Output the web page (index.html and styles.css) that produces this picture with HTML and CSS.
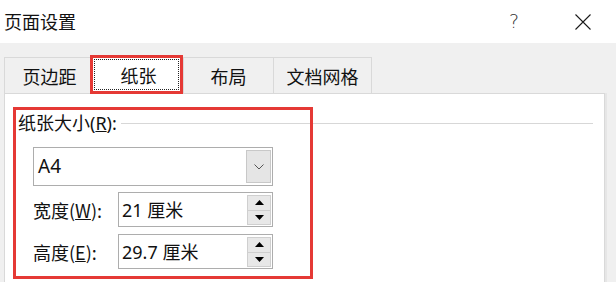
FILE: index.html
```html
<!DOCTYPE html>
<html lang="zh-CN">
<head>
    <meta charset="UTF-8">
    <meta name="viewport" content="width=device-width, initial-scale=1.0">
    <title>页面设置</title>
    <link rel="stylesheet" href="styles.css">
</head>
<body>
    <div class="dialog">
        <div class="titlebar">
            <span class="title">页面设置</span>
            <span class="help">?</span>
            <span class="close">
                <svg width="16" height="16" viewBox="0 0 16 16">
                    <path d="M0.5 0.5 L15.5 15.5 M15.5 0.5 L0.5 15.5" stroke="#1a1a1a" stroke-width="1.1" fill="none"/>
                </svg>
            </span>
        </div>

        <div class="content">
            <div class="tabs">
                <div class="tab tab-margins">页边距</div>
                <div class="tab tab-paper active"><span class="focus">纸张</span></div>
                <div class="tab tab-layout">布局</div>
                <div class="tab tab-grid">文档网格</div>
            </div>

            <div class="panel">
                <div class="group-head">
                    <span class="group-title">纸张大小(<u>R</u>):</span>
                    <span class="rule"></span>
                </div>

                <div class="select">
                    <span class="value">A4</span>
                    <span class="select-btn">
                        <svg width="10" height="6" viewBox="0 0 10 6">
                            <path d="M0.5 0.5 L5 5 L9.5 0.5" stroke="#555" stroke-width="1" fill="none"/>
                        </svg>
                    </span>
                </div>

                <div class="field">
                    <label class="field-label">宽度(<u>W</u>):</label>
                    <div class="spin-input">
                        <span class="value">21 厘米</span>
                        <div class="spinner">
                            <span class="spin-btn"><svg width="9" height="5" viewBox="0 0 9 5"><polygon points="4.5,0 9,5 0,5" fill="#000"/></svg></span>
                            <span class="spin-btn"><svg width="9" height="5" viewBox="0 0 9 5"><polygon points="0,0 9,0 4.5,5" fill="#000"/></svg></span>
                        </div>
                    </div>
                </div>

                <div class="field">
                    <label class="field-label">高度(<u>E</u>):</label>
                    <div class="spin-input">
                        <span class="value">29.7 厘米</span>
                        <div class="spinner">
                            <span class="spin-btn"><svg width="9" height="5" viewBox="0 0 9 5"><polygon points="4.5,0 9,5 0,5" fill="#000"/></svg></span>
                            <span class="spin-btn"><svg width="9" height="5" viewBox="0 0 9 5"><polygon points="0,0 9,0 4.5,5" fill="#000"/></svg></span>
                        </div>
                    </div>
                </div>

                <!-- red annotation box over the paper size group -->
                <div class="highlight"></div>
            </div>
        </div>
    </div>
</body>
</html>
```

FILE: styles.css
```css
body {
    margin: 0;
    width: 616px;
    height: 282px;
    overflow: hidden;
    font-family: "Noto Sans", "Noto Sans CJK SC", sans-serif;
    font-size: 18px;
    color: #111;
    background-color: #f0f0f0;
}

.titlebar {
    display: flex;
    align-items: center;
    height: 43px;
    padding: 0 25px 0 4px;
    background-color: #ffffff;
}

.title {
    flex: 1;
    font-family: "Noto Sans CJK SC", sans-serif;
    line-height: 1;
    padding-bottom: 1px;
}

.help {
    margin-right: 56px;
    font-family: "DejaVu Sans", sans-serif;
    font-size: 19px;
    font-weight: 200;
    color: #333;
    line-height: 1;
}

.close {
    display: flex;
    width: 16px;
    height: 16px;
}

.content {
    padding: 12px 0 0 4px;
}

.tabs {
    display: flex;
    align-items: flex-end;
    height: 38px;
    font-family: "Noto Sans CJK SC", sans-serif;
}

.tab {
    display: flex;
    align-items: center;
    justify-content: center;
    box-sizing: border-box;
    height: 36px;
    border: 1px solid #d9d9d9;
    border-bottom: none;
    border-right: none;
    background-color: #f0f0f0;
    line-height: 1;
}

.tab-margins { width: 86px; padding-left: 4px; }
.tab-layout { width: 90px; }
.tab-grid { width: 99px; border-right: 1px solid #d9d9d9; }

.tab.active {
    position: relative;
    z-index: 1;
    width: 93px;
    height: 39px;
    margin-bottom: -1px;
    padding: 1px;
    border: 3px solid #e53935;
    background-color: #ffffff;
}

.focus {
    display: flex;
    align-items: center;
    justify-content: center;
    align-self: stretch;
    flex: 1;
    padding-left: 4px;
    border: 1px dotted #222;
}

.panel {
    position: relative;
    height: 200px;
    width: 601px;
    box-sizing: border-box;
    padding: 17px 11px 0 13px;
    border: 1px solid #d9d9d9;
    background-color: #ffffff;
    box-shadow: 2px 0 0 #e6e6e6;
}

.group-head {
    display: flex;
    align-items: center;
    height: 24px;
}

.group-title {
    line-height: 1;
}

.rule {
    flex: 1;
    height: 1px;
    margin-left: 4px;
    background-color: #d7d7d7;
}

.select {
    display: flex;
    align-items: center;
    box-sizing: border-box;
    width: 240px;
    height: 39px;
    margin: 12px 0 0 15px;
    padding: 2px 1px 2px 4px;
    border: 1px solid #adadad;
}

.value {
    flex: 1;
    line-height: 1;
}

.select .value {
    font-size: 19px;
}

.select-btn {
    display: flex;
    align-items: center;
    justify-content: center;
    align-self: stretch;
    box-sizing: border-box;
    width: 25px;
    border: 1px solid #c8c8c8;
    background-color: #e5e5e5;
}

.field {
    display: flex;
    align-items: center;
    margin: 6px 0 0 15px;
}

.field + .field {
    margin-top: 7px;
}

.field-label {
    width: 85px;
    font-family: "Noto Sans CJK SC", sans-serif;
    line-height: 1;
}

.spin-input {
    display: flex;
    align-items: center;
    box-sizing: border-box;
    width: 155px;
    height: 35px;
    padding: 2px 1px 1px 3px;
    border: 1px solid #adadad;
}

.spinner {
    display: flex;
    flex-direction: column;
    align-self: stretch;
    width: 24px;
}

.spin-btn {
    display: flex;
    align-items: center;
    justify-content: center;
    flex: 1;
    box-sizing: border-box;
    border: 1px solid #cfcfcf;
    background-color: #e8e8e8;
}

.spin-btn + .spin-btn {
    border-top: none;
}

.highlight {
    position: absolute;
    left: 8px;
    top: 13px;
    width: 300px;
    height: 172px;
    box-sizing: border-box;
    border: 3px solid #e53935;
}
```
